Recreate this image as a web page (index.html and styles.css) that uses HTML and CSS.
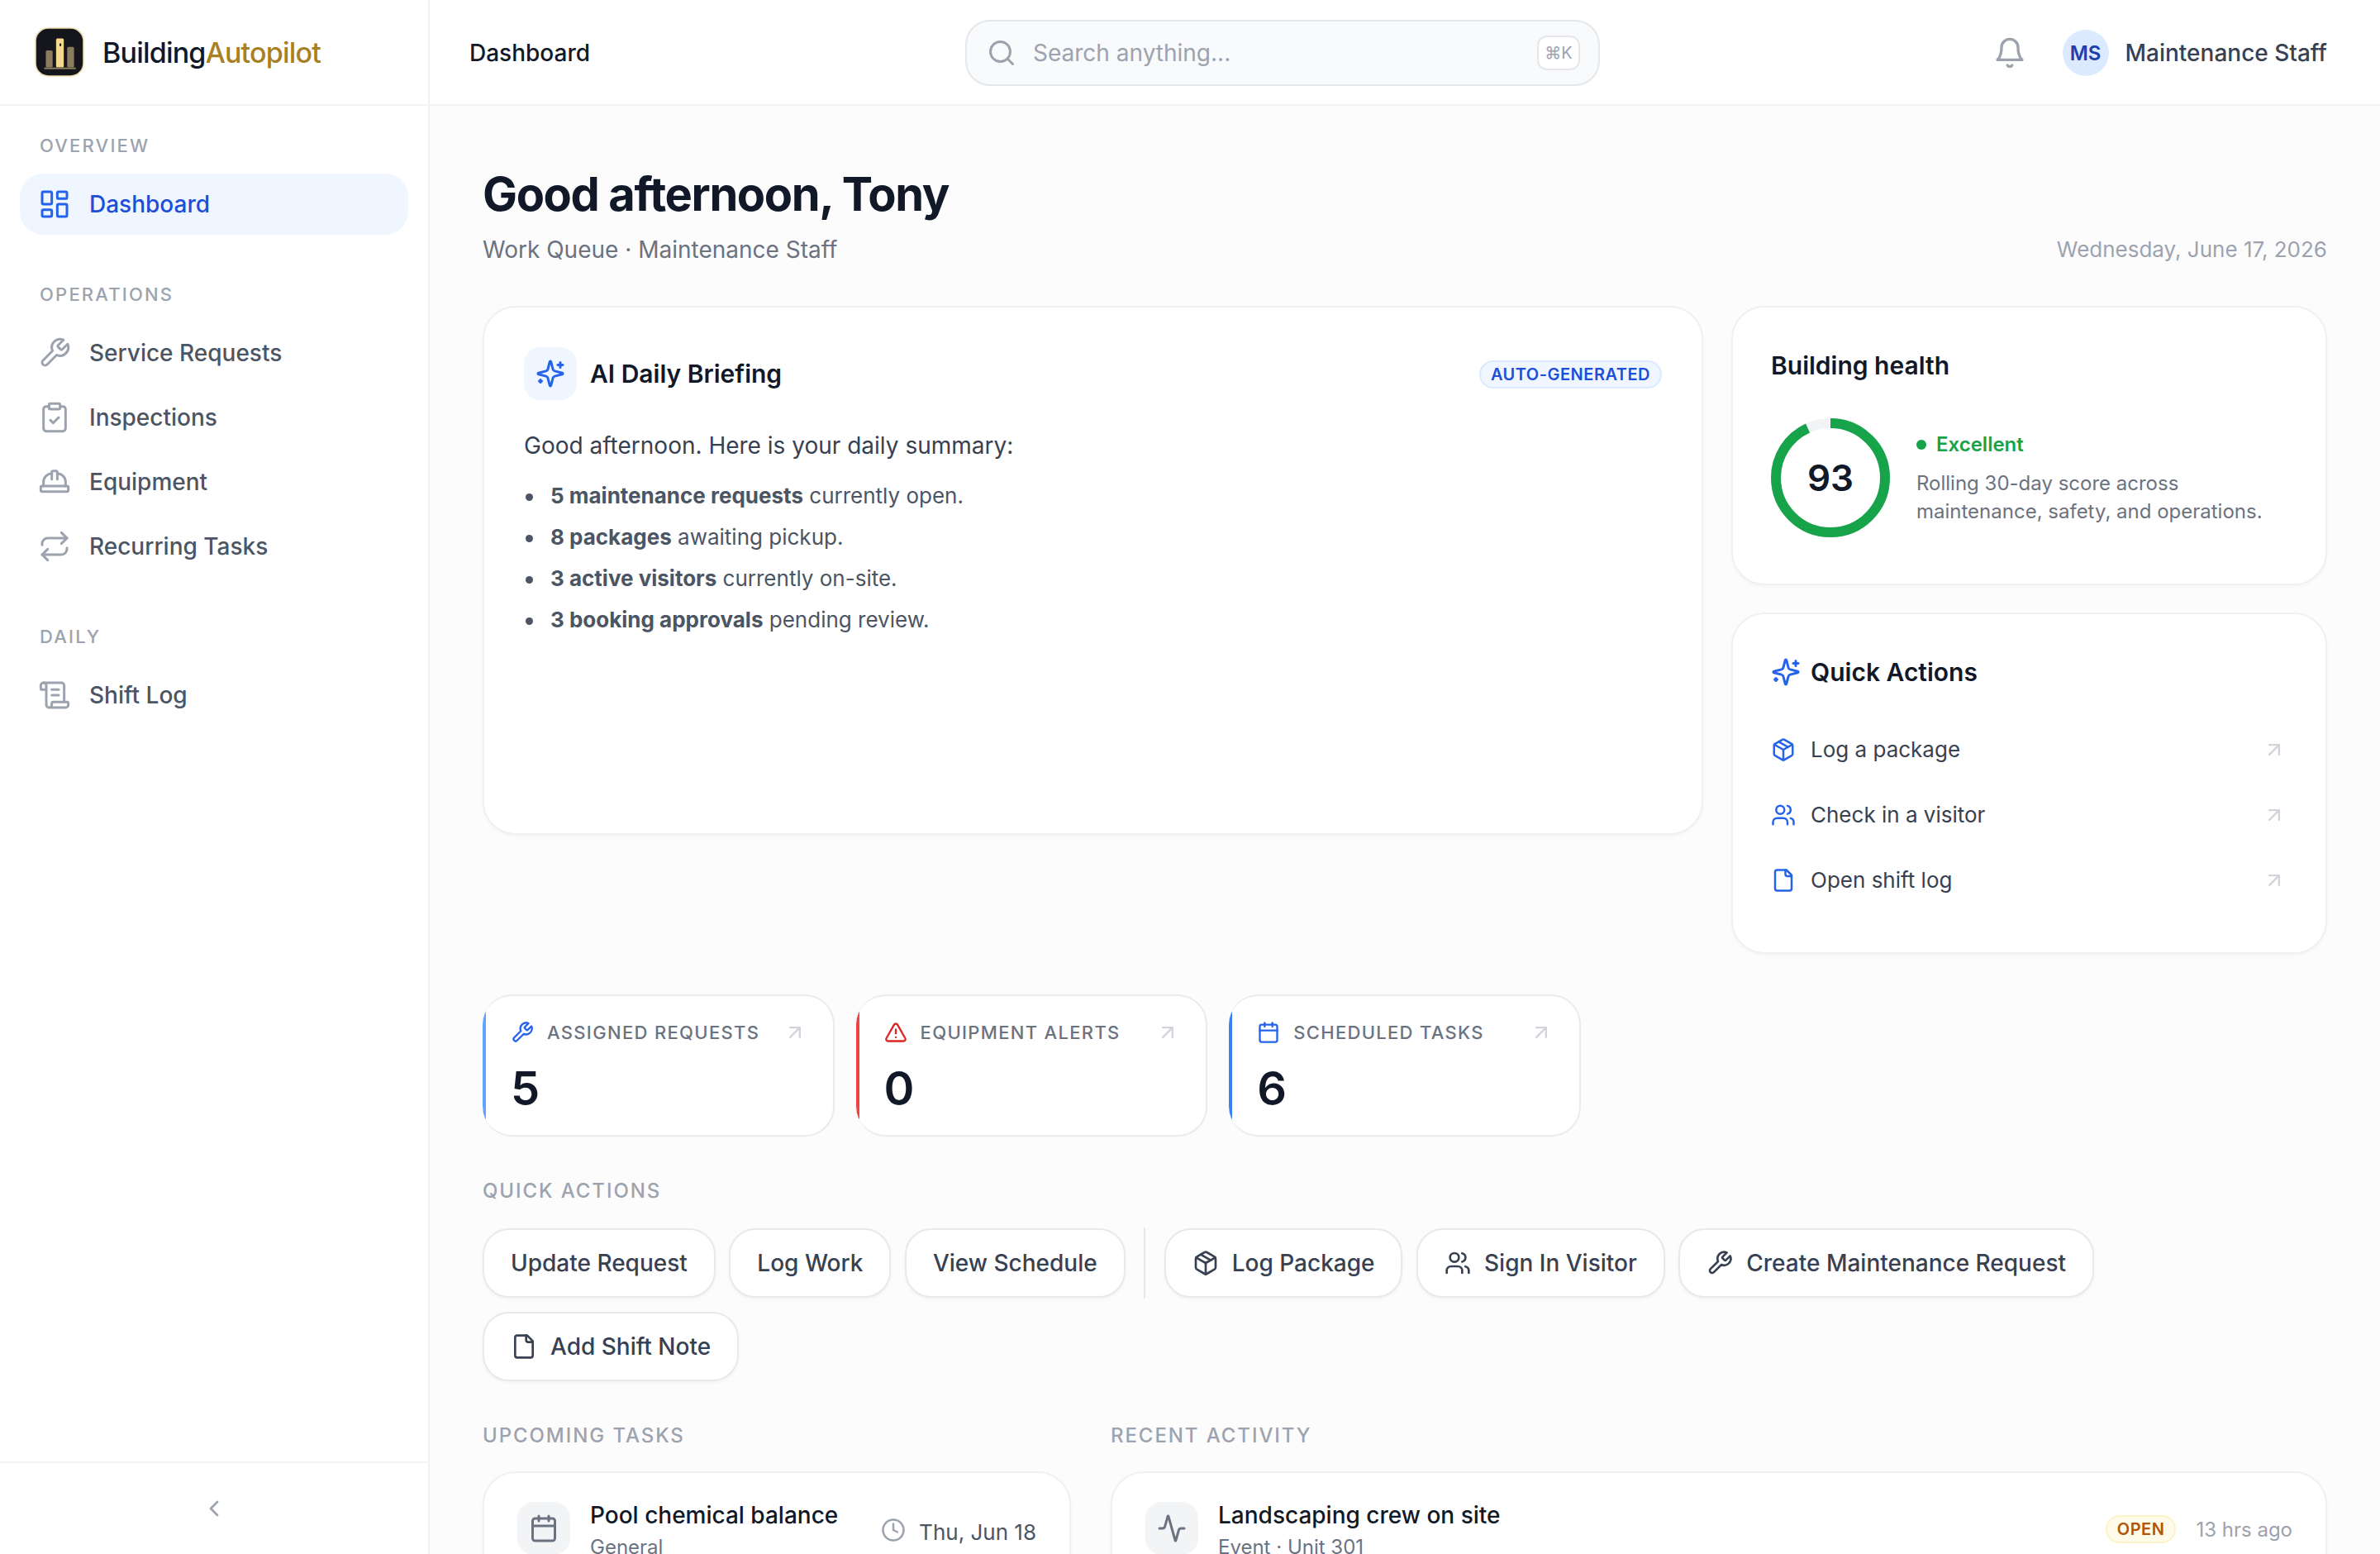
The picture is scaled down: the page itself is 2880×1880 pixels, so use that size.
FILE: index.html
```html
<!DOCTYPE html>
<html lang="en">
<head>
<meta charset="utf-8">
<title>BuildingAutopilot Dashboard</title>
<link rel="stylesheet" href="styles.css">
</head>
<body>
<svg class="sprite" width="0" height="0" aria-hidden="true">
  <symbol id="i-dash" viewBox="0 0 24 24"><rect x="3" y="3" width="7" height="9" rx="1"/><rect x="14" y="3" width="7" height="5" rx="1"/><rect x="14" y="12" width="7" height="9" rx="1"/><rect x="3" y="16" width="7" height="5" rx="1"/></symbol>
  <symbol id="i-wrench" viewBox="0 0 24 24"><path d="M14.7 6.3a1 1 0 0 0 0 1.4l1.6 1.6a1 1 0 0 0 1.4 0l3.77-3.77a6 6 0 0 1-7.94 7.94l-6.91 6.91a2.12 2.12 0 0 1-3-3l6.91-6.91a6 6 0 0 1 7.94-7.94l-3.76 3.76z"/></symbol>
  <symbol id="i-clip" viewBox="0 0 24 24"><rect x="8" y="2" width="8" height="4" rx="1"/><path d="M16 4h2a2 2 0 0 1 2 2v14a2 2 0 0 1-2 2H6a2 2 0 0 1-2-2V6a2 2 0 0 1 2-2h2"/><path d="m9 14 2 2 4-4"/></symbol>
  <symbol id="i-hat" viewBox="0 0 24 24"><path d="M2 18a1 1 0 0 0 1 1h18a1 1 0 0 0 1-1v-2a1 1 0 0 0-1-1H3a1 1 0 0 0-1 1v2z"/><path d="M10 10V5a1 1 0 0 1 1-1h2a1 1 0 0 1 1 1v5"/><path d="M4 15v-3a6 6 0 0 1 6-6"/><path d="M14 6a6 6 0 0 1 6 6v3"/></symbol>
  <symbol id="i-repeat" viewBox="0 0 24 24"><path d="m17 2 4 4-4 4"/><path d="M3 11v-1a4 4 0 0 1 4-4h14"/><path d="m7 22-4-4 4-4"/><path d="M21 13v1a4 4 0 0 1-4 4H3"/></symbol>
  <symbol id="i-scroll" viewBox="0 0 24 24"><path d="M15 12h-5"/><path d="M15 8h-5"/><path d="M19 17V5a2 2 0 0 0-2-2H4"/><path d="M8 21h12a2 2 0 0 0 2-2v-1a1 1 0 0 0-1-1H11a1 1 0 0 0-1 1v1a2 2 0 1 1-4 0V5a2 2 0 1 0-4 0v2a1 1 0 0 0 1 1h3"/></symbol>
  <symbol id="i-chev" viewBox="0 0 24 24"><path d="m15 18-6-6 6-6"/></symbol>
  <symbol id="i-search" viewBox="0 0 24 24"><circle cx="11" cy="11" r="8"/><path d="m21 21-4.3-4.3"/></symbol>
  <symbol id="i-bell" viewBox="0 0 24 24"><path d="M6 8a6 6 0 0 1 12 0c0 7 3 9 3 9H3s3-2 3-9"/><path d="M10.3 21a1.94 1.94 0 0 0 3.4 0"/></symbol>
  <symbol id="i-spark" viewBox="0 0 24 24"><path d="M9.937 15.5A2 2 0 0 0 8.5 14.063l-6.135-1.582a.5.5 0 0 1 0-.962L8.5 9.936A2 2 0 0 0 9.937 8.5l1.582-6.135a.5.5 0 0 1 .963 0L14.063 8.5A2 2 0 0 0 15.5 9.937l6.135 1.581a.5.5 0 0 1 0 .964L15.5 14.063a2 2 0 0 0-1.437 1.437l-1.582 6.135a.5.5 0 0 1-.963 0z"/><path d="M20 3v4"/><path d="M22 5h-4"/><path d="M4 17v2"/><path d="M5 18H3"/></symbol>
  <symbol id="i-pkg" viewBox="0 0 24 24"><path d="M11 21.73a2 2 0 0 0 2 0l7-4A2 2 0 0 0 21 16V8a2 2 0 0 0-1-1.73l-7-4a2 2 0 0 0-2 0l-7 4A2 2 0 0 0 3 8v8a2 2 0 0 0 1 1.73z"/><path d="M12 22V12"/><path d="m3.3 7 8.7 5 8.7-5"/><path d="m7.5 4.27 9 5.15"/></symbol>
  <symbol id="i-users" viewBox="0 0 24 24"><path d="M16 21v-2a4 4 0 0 0-4-4H6a4 4 0 0 0-4 4v2"/><circle cx="9" cy="7" r="4"/><path d="M22 21v-2a4 4 0 0 0-3-3.87"/><path d="M16 3.13a4 4 0 0 1 0 7.75"/></symbol>
  <symbol id="i-file" viewBox="0 0 24 24"><path d="M15 2H6a2 2 0 0 0-2 2v16a2 2 0 0 0 2 2h12a2 2 0 0 0 2-2V7Z"/><path d="M14 2v4a2 2 0 0 0 2 2h4"/></symbol>
  <symbol id="i-arrow" viewBox="0 0 24 24"><path d="M7 7h10v10"/><path d="M7 17 17 7"/></symbol>
  <symbol id="i-alert" viewBox="0 0 24 24"><path d="m21.73 18-8-14a2 2 0 0 0-3.48 0l-8 14A2 2 0 0 0 4 21h16a2 2 0 0 0 1.73-3"/><path d="M12 9v4"/><path d="M12 17h.01"/></symbol>
  <symbol id="i-cal" viewBox="0 0 24 24"><path d="M8 2v4"/><path d="M16 2v4"/><rect x="3" y="4" width="18" height="18" rx="2"/><path d="M3 10h18"/></symbol>
  <symbol id="i-clock" viewBox="0 0 24 24"><circle cx="12" cy="12" r="10"/><polyline points="12 6 12 12 16 14"/></symbol>
  <symbol id="i-activity" viewBox="0 0 24 24"><path d="M22 12h-2.48a2 2 0 0 0-1.93 1.46l-2.35 8.36a.25.25 0 0 1-.48 0L9.24 2.18a.25.25 0 0 0-.48 0l-2.35 8.36A2 2 0 0 1 4.49 12H2"/></symbol>
</svg>

<aside class="sidebar">
  <div class="brand">
    <svg class="logo" viewBox="0 0 58 58">
      <rect x="1" y="1" width="56" height="56" rx="15" class="logo-tile"/>
      <rect x="13" y="27" width="8" height="20" rx="1.5" class="logo-side"/>
      <rect x="25" y="13" width="9" height="34" rx="1.5" class="logo-main"/>
      <rect x="38" y="23" width="8" height="24" rx="1.5" class="logo-side"/>
      <rect x="11" y="47" width="37" height="2" class="logo-side"/>
      <rect x="29" y="19" width="2" height="3" class="logo-dot"/>
    </svg>
    <span class="brand-name">Building<span class="brand-accent">Autopilot</span></span>
  </div>
  <nav class="nav">
    <div class="nav-label">OVERVIEW</div>
    <a class="nav-item active"><svg class="ico nav-ico"><use href="#i-dash"/></svg>Dashboard</a>
    <div class="nav-label spaced">OPERATIONS</div>
    <a class="nav-item"><svg class="ico nav-ico"><use href="#i-wrench"/></svg>Service Requests</a>
    <a class="nav-item"><svg class="ico nav-ico"><use href="#i-clip"/></svg>Inspections</a>
    <a class="nav-item"><svg class="ico nav-ico"><use href="#i-hat"/></svg>Equipment</a>
    <a class="nav-item"><svg class="ico nav-ico"><use href="#i-repeat"/></svg>Recurring Tasks</a>
    <div class="nav-label spaced">DAILY</div>
    <a class="nav-item"><svg class="ico nav-ico"><use href="#i-scroll"/></svg>Shift Log</a>
  </nav>
  <div class="collapse"><svg class="ico collapse-ico"><use href="#i-chev"/></svg></div>
</aside>

<div class="main">
  <header class="topbar">
    <div class="crumb">Dashboard</div>
    <div class="search">
      <svg class="ico search-ico"><use href="#i-search"/></svg>
      <span class="search-text">Search anything...</span>
      <kbd class="kbd">⌘K</kbd>
    </div>
    <div class="top-right">
      <svg class="ico bell"><use href="#i-bell"/></svg>
      <div class="avatar">MS</div>
      <span class="user">Maintenance Staff</span>
    </div>
  </header>

  <main class="content">
    <div class="page-head">
      <div>
        <h1 class="title">Good afternoon, Tony</h1>
        <div class="subtitle">Work Queue · Maintenance Staff</div>
      </div>
      <div class="date">Wednesday, June 17, 2026</div>
    </div>

    <div class="top-grid">
      <section class="card briefing">
        <div class="brief-head">
          <div class="spark-tile"><svg class="ico spark-ico"><use href="#i-spark"/></svg></div>
          <h2 class="card-title">AI Daily Briefing</h2>
          <span class="pill">AUTO-GENERATED</span>
        </div>
        <p class="brief-lead">Good afternoon. Here is your daily summary:</p>
        <ul class="brief-list">
          <li><strong>5 maintenance requests</strong> currently open.</li>
          <li><strong>8 packages</strong> awaiting pickup.</li>
          <li><strong>3 active visitors</strong> currently on-site.</li>
          <li><strong>3 booking approvals</strong> pending review.</li>
        </ul>
      </section>

      <div class="side-col">
        <section class="card health">
          <h2 class="card-title">Building health</h2>
          <div class="health-row">
            <div class="ring">
              <svg class="ring-svg" viewBox="0 0 144 144">
                <circle cx="72" cy="72" r="66" class="ring-track"/>
                <circle cx="72" cy="72" r="66" class="ring-value" stroke-dasharray="385.7 414.7" transform="rotate(-90 72 72)"/>
              </svg>
              <span class="ring-num">93</span>
            </div>
            <div class="health-info">
              <div class="health-status"><span class="dot"></span>Excellent</div>
              <p class="health-desc">Rolling 30-day score across maintenance, safety, and operations.</p>
            </div>
          </div>
        </section>

        <section class="card qa">
          <div class="qa-head"><svg class="ico qa-spark"><use href="#i-spark"/></svg><h2 class="card-title">Quick Actions</h2></div>
          <div class="qa-list">
            <a class="qa-row"><svg class="ico qa-ico"><use href="#i-pkg"/></svg><span class="qa-text">Log a package</span><svg class="ico arrow"><use href="#i-arrow"/></svg></a>
            <a class="qa-row"><svg class="ico qa-ico"><use href="#i-users"/></svg><span class="qa-text">Check in a visitor</span><svg class="ico arrow"><use href="#i-arrow"/></svg></a>
            <a class="qa-row"><svg class="ico qa-ico"><use href="#i-file"/></svg><span class="qa-text">Open shift log</span><svg class="ico arrow"><use href="#i-arrow"/></svg></a>
          </div>
        </section>
      </div>
    </div>

    <div class="stats">
      <div class="stat stat-sky">
        <div class="stat-top"><svg class="ico stat-ico blue"><use href="#i-wrench"/></svg><span class="stat-label">ASSIGNED REQUESTS</span><svg class="ico arrow"><use href="#i-arrow"/></svg></div>
        <div class="stat-num">5</div>
      </div>
      <div class="stat stat-red">
        <div class="stat-top"><svg class="ico stat-ico red"><use href="#i-alert"/></svg><span class="stat-label">EQUIPMENT ALERTS</span><svg class="ico arrow"><use href="#i-arrow"/></svg></div>
        <div class="stat-num">0</div>
      </div>
      <div class="stat stat-blue">
        <div class="stat-top"><svg class="ico stat-ico blue"><use href="#i-cal"/></svg><span class="stat-label">SCHEDULED TASKS</span><svg class="ico arrow"><use href="#i-arrow"/></svg></div>
        <div class="stat-num">6</div>
      </div>
    </div>

    <div class="section-label actions-label">QUICK ACTIONS</div>
    <div class="actions">
      <button class="btn">Update Request</button>
      <button class="btn">Log Work</button>
      <button class="btn">View Schedule</button>
      <span class="divider"></span>
      <button class="btn"><svg class="ico btn-ico"><use href="#i-pkg"/></svg>Log Package</button>
      <button class="btn"><svg class="ico btn-ico"><use href="#i-users"/></svg>Sign In Visitor</button>
      <button class="btn"><svg class="ico btn-ico"><use href="#i-wrench"/></svg>Create Maintenance Request</button>
      <button class="btn"><svg class="ico btn-ico"><use href="#i-file"/></svg>Add Shift Note</button>
    </div>

    <div class="bottom-grid">
      <section>
        <div class="section-label bottom-label">UPCOMING TASKS</div>
        <div class="card list-card">
          <div class="list-row">
            <div class="tile"><svg class="ico tile-ico"><use href="#i-cal"/></svg></div>
            <div class="row-body">
              <div class="row-title">Pool chemical balance</div>
              <div class="row-sub">General</div>
            </div>
            <div class="when"><svg class="ico clock"><use href="#i-clock"/></svg>Thu, Jun 18</div>
          </div>
        </div>
      </section>
      <section>
        <div class="section-label bottom-label">RECENT ACTIVITY</div>
        <div class="card list-card">
          <div class="list-row">
            <div class="tile"><svg class="ico tile-ico"><use href="#i-activity"/></svg></div>
            <div class="row-body">
              <div class="row-title">Landscaping crew on site</div>
              <div class="row-sub">Event · Unit 301</div>
            </div>
            <span class="status-open">OPEN</span>
            <span class="ago">13 hrs ago</span>
          </div>
        </div>
      </section>
    </div>
  </main>
</div>
</body>
</html>
```
FILE: styles.css
```css
* { box-sizing: border-box; }
html, body { margin: 0; height: 100%; }
body {
  display: flex;
  height: 100vh;
  overflow: hidden;
  background: #fcfcfd;
  color: #111827;
  font-family: Inter, "Liberation Sans", sans-serif;
  font-size: 28px;
}
h1, h2, p, ul { margin: 0; padding: 0; }
.sprite { display: block; width: 0; height: 0; overflow: hidden; }
.ico {
  display: block;
  flex: none;
  fill: none;
  stroke: currentColor;
  stroke-width: 2;
  stroke-linecap: round;
  stroke-linejoin: round;
}

/* Sidebar */
.sidebar {
  flex: 0 0 520px;
  width: 520px;
  height: 100%;
  display: flex;
  flex-direction: column;
  background: #fff;
  border-right: 2px solid #f0f1f4;
}
.brand {
  height: 128px;
  flex: none;
  display: flex;
  align-items: center;
  gap: 22px;
  padding-left: 42px;
  border-bottom: 2px solid #f3f4f6;
}
.logo { width: 60px; height: 60px; flex: none; }
.logo-tile { fill: #14161c; stroke: #ecd9ac; stroke-width: 1.5; }
.logo-side { fill: #8a7c5c; }
.logo-main { fill: #f5d88f; }
.logo-dot { fill: #14161c; }
.brand-name { font-size: 34px; font-weight: 500; letter-spacing: -0.8px; color: #111827; }
.brand-accent { color: #a87f24; }
.nav { flex: 1; padding: 24px 24px 0; display: flex; flex-direction: column; }
.nav-label {
  height: 48px;
  padding: 0 24px;
  margin-bottom: 10px;
  display: flex;
  align-items: center;
  font-size: 22px;
  font-weight: 500;
  letter-spacing: 2.2px;
  color: #9ca3af;
}
.nav-label.spaced { margin-top: 44px; }
.nav-item {
  height: 74px;
  margin-bottom: 4px;
  padding: 0 22px;
  display: flex;
  align-items: center;
  gap: 22px;
  border-radius: 28px;
  font-size: 28px;
  font-weight: 500;
  color: #4b5563;
}
.nav-ico { width: 40px; height: 40px; color: #9ca3af; stroke-width: 1.8; }
.nav-item.active { background: #eff6ff; color: #1d4ed8; }
.nav-item.active .nav-ico { color: #2563eb; }
.collapse {
  height: 112px;
  flex: none;
  display: flex;
  align-items: center;
  justify-content: center;
  border-top: 2px solid #f3f4f6;
}
.collapse-ico { width: 32px; height: 32px; color: #9ca3af; }

/* Top bar */
.main { flex: 1; min-width: 0; display: flex; flex-direction: column; height: 100%; }
.topbar {
  height: 128px;
  flex: none;
  display: flex;
  align-items: center;
  padding: 2px 64px 0 48px;
  background: #fff;
  border-bottom: 2px solid #f3f4f6;
}
.crumb { flex: 0 0 600px; font-size: 28px; font-weight: 500; color: #111827; }
.search {
  flex: 0 0 768px;
  height: 80px;
  display: flex;
  align-items: center;
  padding: 0 22px 0 24px;
  gap: 20px;
  background: #f9fafb;
  border: 2px solid #e5e7eb;
  border-radius: 30px;
}
.search-ico { width: 36px; height: 36px; color: #9ca3af; }
.search-text { flex: 1; font-size: 28px; color: #9ca3af; }
.kbd {
  width: 52px;
  height: 42px;
  display: flex;
  align-items: center;
  justify-content: center;
  background: #fff;
  border: 2px solid #e5e7eb;
  border-radius: 12px;
  font-family: Inter, "DejaVu Sans", sans-serif;
  font-size: 20px;
  color: #9ca3af;
}
.top-right { flex: 1; display: flex; align-items: center; justify-content: flex-end; }
.bell { width: 40px; height: 40px; color: #9ca3af; margin-right: 44px; }
.avatar {
  width: 56px;
  height: 56px;
  margin-right: 20px;
  display: flex;
  align-items: center;
  justify-content: center;
  border-radius: 50%;
  background: #dbeafe;
  color: #1e40af;
  font-size: 24px;
  font-weight: 600;
}
.user { font-size: 28px; font-weight: 500; color: #374151; }

/* Content */
.content { flex: 1; min-height: 0; overflow: hidden; padding: 71px 64px 0; }
.page-head { display: flex; justify-content: space-between; align-items: flex-end; margin-bottom: 46px; }
.title { font-size: 56px; line-height: 72px; font-weight: 700; letter-spacing: -1.4px; color: #111827; }
.subtitle { margin-top: 9px; font-size: 28px; line-height: 44px; color: #6b7280; }
.date { font-size: 26px; line-height: 44px; color: #9ca3af; }

.card {
  background: #fff;
  border: 2px solid #eef0f3;
  border-radius: 40px;
  box-shadow: 0 2px 4px rgba(17, 24, 39, 0.03);
}
.card-title { font-size: 30px; font-weight: 600; line-height: 44px; color: #111827; }

.top-grid { display: grid; grid-template-columns: 1fr 721px; gap: 34px; align-items: start; margin-bottom: 49px; }
.briefing { height: 640px; padding: 48px; }
.brief-head { display: flex; align-items: center; gap: 16px; margin-bottom: 33px; }
.brief-head .card-title { flex: 1; }
.spark-tile {
  width: 64px;
  height: 64px;
  display: flex;
  align-items: center;
  justify-content: center;
  background: #eff6ff;
  border-radius: 20px;
}
.spark-ico { width: 36px; height: 36px; color: #2563eb; }
.pill {
  height: 34px;
  margin-top: 2px;
  padding: 0 12px;
  display: flex;
  align-items: center;
  background: #eff6ff;
  border: 2px solid #dbeafe;
  border-radius: 17px;
  font-size: 20px;
  font-weight: 600;
  letter-spacing: 0.5px;
  color: #1d4ed8;
}
.brief-lead { font-size: 28px; line-height: 44px; color: #374151; margin-bottom: 14px; }
.brief-list { list-style: none; font-size: 26px; line-height: 50px; color: #4b5563; }
.brief-list li::before {
  content: "";
  display: inline-block;
  width: 9px;
  height: 9px;
  margin: 0 21px 0 2px;
  border-radius: 50%;
  background: #4b5563;
  vertical-align: middle;
}
.brief-list strong { font-weight: 700; }

.side-col { display: flex; flex-direction: column; gap: 33px; }
.health { height: 338px; padding: 48px 48px 48px 46px; }
.health-row { display: flex; align-items: center; gap: 32px; margin-top: 42px; }
.ring { display: grid; width: 144px; height: 144px; flex: none; place-items: center; }
.ring-svg, .ring-num { grid-area: 1 / 1; }
.ring-svg { width: 144px; height: 144px; display: block; }
.ring-track { fill: none; stroke: #f3f4f6; stroke-width: 12; }
.ring-value { fill: none; stroke: #16a34a; stroke-width: 12; }
.ring-num { font-size: 44px; font-weight: 600; color: #111827; }
.health-info { flex: 1; }
.health-status { display: flex; align-items: center; gap: 12px; font-size: 24px; line-height: 36px; font-weight: 600; color: #16a34a; margin-bottom: 12px; }
.dot { width: 12px; height: 12px; border-radius: 50%; background: #16a34a; }
.health-desc { font-size: 24px; line-height: 34px; color: #6b7280; }

.qa { height: 413px; padding: 48px 48px 48px 46px; }
.qa-head { display: flex; align-items: center; gap: 12px; }
.qa-spark { width: 36px; height: 36px; color: #2563eb; }
.qa-list { margin-top: 32px; display: flex; flex-direction: column; }
.qa-row { height: 79px; display: flex; align-items: center; gap: 18px; }
.qa-ico { width: 30px; height: 30px; color: #2563eb; }
.qa-text { flex: 1; font-size: 26px; color: #374151; }
.arrow { width: 28px; height: 28px; color: #d1d5db; }

.stats { display: grid; grid-template-columns: repeat(5, minmax(0, 1fr)); gap: 26px; margin-bottom: 50px; }
.stat {
  height: 172px;
  padding: 26px 32px 0 34px;
  border: 2px solid #eaebef;
  border-left: 0;
  border-radius: 36px;
  box-shadow: 0 1px 2px rgba(17, 24, 39, 0.02);
}
.stat-sky { background: linear-gradient(90deg, #60a5fa 4px, #fff 4px); }
.stat-red { background: linear-gradient(90deg, #ef4444 4px, #fff 4px); }
.stat-blue { background: linear-gradient(90deg, #3b82f6 4px, #fff 4px); }
.stat-top { display: flex; align-items: center; gap: 16px; height: 36px; }
.stat-ico { width: 28px; height: 28px; }
.stat-ico.blue { color: #2563eb; }
.stat-ico.red { color: #dc2626; }
.stat-label { flex: 1; font-size: 22px; font-weight: 500; letter-spacing: 1.32px; color: #6b7280; white-space: nowrap; }
.stat-num { margin-top: 14px; font-size: 56px; line-height: 72px; font-weight: 600; color: #111827; }

.section-label { font-size: 24px; line-height: 32px; font-weight: 500; letter-spacing: 1.92px; color: #9ca3af; }
.actions-label { margin-bottom: 28px; }
.actions { display: flex; flex-wrap: wrap; align-items: center; gap: 16px 16.5px; margin-bottom: 50px; }
.btn {
  height: 84px;
  padding: 0 32px;
  display: flex;
  align-items: center;
  gap: 16px;
  background: #fff;
  border: 2px solid #e8e9ed;
  border-radius: 32px;
  box-shadow: 0 2px 4px rgba(17, 24, 39, 0.04);
  font: 500 28px Inter, "Liberation Sans", sans-serif;
  color: #374151;
  white-space: nowrap;
}
.btn-ico { width: 32px; height: 32px; }
.divider { width: 2px; height: 86px; margin: 0 6px; background: #e5e7eb; }

.bottom-grid { display: grid; grid-template-columns: 712px 1fr; gap: 48px; }
.bottom-label { margin-bottom: 27px; }
.list-card { padding: 35px 40px; }
.list-row { display: flex; align-items: flex-start; gap: 24px; }
.tile {
  width: 64px;
  height: 64px;
  flex: none;
  display: flex;
  align-items: center;
  justify-content: center;
  background: #f3f4f6;
  border-radius: 20px;
}
.tile-ico { width: 36px; height: 36px; color: #6b7280; }
.row-body { flex: 1; min-width: 0; }
.row-title { font-size: 28px; line-height: 32px; font-weight: 500; color: #111827; white-space: nowrap; }
.row-sub { margin-top: 6px; font-size: 24px; line-height: 34px; color: #6b7280; }
.when { display: flex; align-items: center; gap: 16px; padding-top: 19px; font-size: 26px; line-height: 36px; color: #4b5563; }
.clock { width: 30px; height: 30px; margin-bottom: 6px; color: #9ca3af; }
.status-open {
  height: 34px;
  margin-top: 16px;
  padding: 0 12px;
  display: flex;
  align-items: center;
  background: #fffbeb;
  border: 2px solid #fef3c7;
  border-radius: 17px;
  font-size: 20px;
  font-weight: 600;
  letter-spacing: 0.5px;
  color: #b45309;
}
.ago { padding-top: 16px; font-size: 24px; line-height: 36px; color: #9ca3af; }
```
